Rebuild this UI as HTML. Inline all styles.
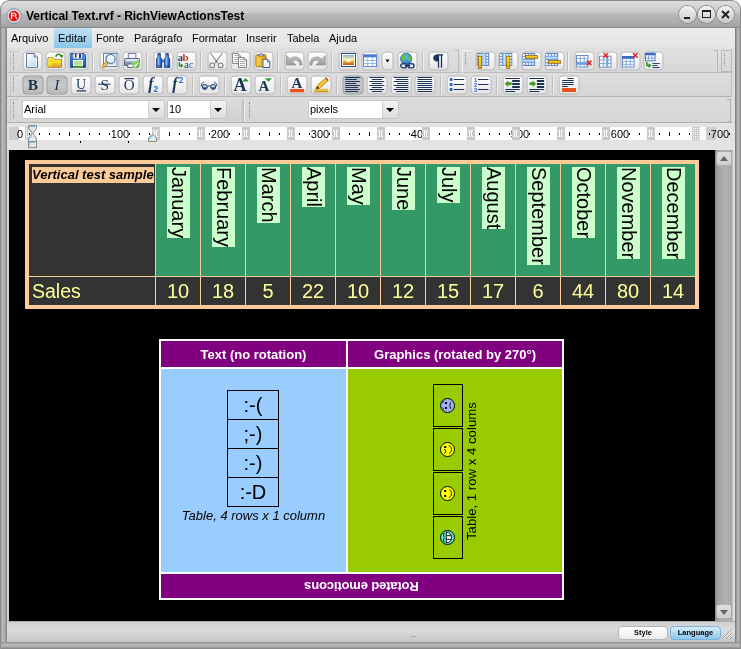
<!DOCTYPE html>
<html>
<head>
<meta charset="utf-8">
<title>Vertical Text.rvf - RichViewActionsTest</title>
<style>
html,body{margin:0;padding:0;}
body{width:741px;height:649px;overflow:hidden;background:#fff;font-family:"Liberation Sans",sans-serif;position:relative;}
.abs{position:absolute;}
#win{position:absolute;left:0;top:0;width:741px;height:649px;border-radius:9px 9px 0 0;overflow:hidden;
 background:linear-gradient(#e4e4e4 0px,#dcdcdc 2px,#c8c8c8 13px,#b8b8b8 14px,#a6a6a6 26px,#8c8c8c 27.5px,#a0a0a0 28px,#b0b0b0 649px);will-change:transform;}
#win:before{content:"";position:absolute;left:0;top:0;right:0;bottom:0;border:1px solid #8a8a8a;border-radius:9px 9px 0 0;box-sizing:border-box;}
#frameL{left:1px;top:28px;width:6px;height:614px;background:linear-gradient(90deg,#a0a0a0 0,#b8b8b8 1.5px,#acacac 4px,#8c8c8c 5px,#8a8a8a 6px);}
#frameR{left:734px;top:28px;width:6px;height:614px;background:linear-gradient(90deg,#e0e0e0 0,#7a7a7a 1px,#8a8a8a 2px,#acacac 3px,#b4b4b4 5px,#989898 6px);}
#frameB{left:1px;top:642px;width:739px;height:6px;background:linear-gradient(#8e8e8e,#b4b4b4 40%,#b8b8b8 70%,#8c8c8c);}
#client{left:7px;top:28px;width:728px;height:614px;background:#dedede;}
#title{left:26px;top:9px;font:bold 12px "Liberation Sans",sans-serif;color:#000;white-space:nowrap;letter-spacing:-0.05px;}
.cap{width:17px;height:17px;border-radius:9px;top:6px;background:linear-gradient(#f4f4f4,#c9c9c9);box-shadow:0 0 0 1px #8f8f8f;}
#menubar{left:7px;top:28px;width:728px;height:20px;background:linear-gradient(#ececec,#e4e4e4);}
.mi{position:absolute;top:28px;height:20px;line-height:20px;font-size:11px;color:#000;white-space:nowrap;}
#mhl{left:54px;top:28px;width:38px;height:20px;background:linear-gradient(#bfe0f3,#8dc6ea);}
.tbrow{left:7px;width:728px;}
.btn{position:absolute;box-sizing:border-box;border:1px solid #bcbcbc;border-radius:4px;background:linear-gradient(#ffffff,#f3f3f3 50%,#e4e4e4);overflow:hidden;}
.r1{top:51px;width:20px;height:19px;transform:translate(.5px,.5px);}
.r2{top:75px;width:21px;height:19px;transform:translate(.5px,.5px);}
.btn.dn{background:linear-gradient(#bdbdbd,#c9c9c9 50%,#b9b9b9);border-color:#9a9a9a;}
.btn svg{position:absolute;left:0;top:0;overflow:visible;}
.sep{position:absolute;width:1px;background:#bdbdbd;box-shadow:1px 0 0 #f2f2f2;}
.grip{position:absolute;width:1px;border-left:1px dotted #8a8a8a;}
#doc{left:9px;top:150px;width:706px;height:471px;background:#000;overflow:hidden;}
/* table 1 */
#t1{left:16px;top:10px;width:674px;height:149px;background:#ffcc99;}
.c1{position:absolute;background:#339966;top:4px;width:44px;height:112px;}
.c2{position:absolute;background:#333333;top:117px;width:44px;height:28px;color:#ffff99;font-size:20px;text-align:center;line-height:28px;}
.vl{position:absolute;left:11px;top:3px;writing-mode:vertical-rl;font-size:20px;line-height:23px;background:#ccffcc;color:#000;white-space:nowrap;height:auto;}
/* table 2 */
#t2{left:150px;top:189px;width:405px;height:261px;background:#fff;}
.hd{position:absolute;background:#800080;color:#fff;font:bold 13px "Liberation Sans",sans-serif;text-align:center;white-space:nowrap;}
.it1{position:absolute;left:66px;width:52px;height:30px;box-sizing:border-box;border:1px solid #000;font-size:20px;text-align:center;line-height:28px;color:#000;}
.it2{position:absolute;left:85px;width:30px;height:43px;box-sizing:border-box;border:1px solid #000;}
.it2 svg{position:absolute;left:6px;top:13px;}
</style>
</head>
<body>
<div id="win">
 <div id="frameL" class="abs"></div><div id="frameR" class="abs"></div><div id="frameB" class="abs"></div>
 <div id="client" class="abs"></div>
 <!-- title -->
 <svg class="abs" style="left:6px;top:8px" width="16" height="16" viewBox="0 0 16 16"><circle cx="8" cy="8" r="7.3" fill="#d9dde6" stroke="#7f8fae" stroke-width="1"/><circle cx="8" cy="8" r="5.2" fill="#e31313"/><path d="M5.5 11V5.2h3.2M5.5 7.8h2.6M8 5.4c2.2.2 2.6 1.6 1.2 2.6l1.6 3" stroke="#fff" stroke-width="1.1" fill="none"/></svg>
 <div id="title" class="abs">Vertical Text.rvf - RichViewActionsTest</div>
 <div class="abs cap" style="left:679px"><div class="abs" style="left:5px;top:11px;width:6px;height:2px;background:#222"></div></div>
 <div class="abs cap" style="left:698px"><div class="abs" style="left:4px;top:4px;width:9px;height:8px;box-sizing:border-box;border:1px solid #222;border-top-width:2px"></div></div>
 <div class="abs cap" style="left:717px"><svg class="abs" style="left:0;top:0" width="17" height="17"><path d="M5 5l7 7M12 5l-7 7" stroke="#222" stroke-width="2"/></svg></div>
 <!-- menu -->
 <div id="menubar" class="abs"></div>
 <div id="mhl" class="abs"></div>
 <div class="mi" style="left:11px">Arquivo</div>
 <div class="mi" style="left:58px">Editar</div>
 <div class="mi" style="left:96px">Fonte</div>
 <div class="mi" style="left:134px">Parágrafo</div>
 <div class="mi" style="left:192px">Formatar</div>
 <div class="mi" style="left:246px">Inserir</div>
 <div class="mi" style="left:287px">Tabela</div>
 <div class="mi" style="left:329px">Ajuda</div>
 <!-- toolbars -->
 <div id="tb1" class="abs tbrow" style="top:48px;height:24px;background:linear-gradient(#e0e0e0,#d7d7d7);border-bottom:1px solid #bcbcbc;width:725px"></div>
 <div id="tb2" class="abs tbrow" style="top:73px;height:23px;background:linear-gradient(#dedede,#d5d5d5);border-bottom:1px solid #b4b4b4;border-right:1px solid #bcbcbc;width:724px"></div>
 <div id="tb3" class="abs tbrow" style="top:97px;height:25px;background:linear-gradient(#dcdcdc,#d6d6d6);border-bottom:1px solid #b0b0b0;width:725px"></div>
 <div id="rulerbg" class="abs" style="left:7px;top:123px;width:728px;height:27px;background:#e3e3e3"></div>
 <svg width="0" height="0" style="position:absolute"><defs>
<linearGradient id="gPage" x1="0" y1="0" x2="0.8" y2="1"><stop offset="0" stop-color="#ffffff"/><stop offset="1" stop-color="#bcdcf0"/></linearGradient>
<linearGradient id="gFold" x1="0" y1="0" x2="0" y2="1"><stop offset="0" stop-color="#ffe23a"/><stop offset="1" stop-color="#e2a82e"/></linearGradient>
<linearGradient id="gBlue" x1="0" y1="0" x2="0" y2="1"><stop offset="0" stop-color="#5a98ea"/><stop offset="1" stop-color="#1a55b8"/></linearGradient>
<linearGradient id="gBino" x1="0" y1="0" x2="1" y2="0"><stop offset="0" stop-color="#1d4fae"/><stop offset="0.35" stop-color="#8fc0fa"/><stop offset="0.7" stop-color="#2f6fd6"/><stop offset="1" stop-color="#153c8c"/></linearGradient>
<linearGradient id="gSky" x1="0" y1="0" x2="0" y2="1"><stop offset="0" stop-color="#7fb6e8"/><stop offset="0.45" stop-color="#fff0a0"/><stop offset="0.6" stop-color="#ffb52e"/><stop offset="1" stop-color="#c95a10"/></linearGradient>
<linearGradient id="gCol" x1="0" y1="0" x2="1" y2="0"><stop offset="0" stop-color="#a8ccf4"/><stop offset="1" stop-color="#5a90d8"/></linearGradient>
<linearGradient id="gRow" x1="0" y1="0" x2="0" y2="1"><stop offset="0" stop-color="#a8ccf4"/><stop offset="1" stop-color="#5a90d8"/></linearGradient>
<linearGradient id="gGrey" x1="0" y1="0" x2="0" y2="1"><stop offset="0" stop-color="#c6c6c6"/><stop offset="1" stop-color="#9a9a9a"/></linearGradient>
<linearGradient id="gPrn" x1="0" y1="0" x2="0" y2="1"><stop offset="0" stop-color="#c4d0e0"/><stop offset="1" stop-color="#6f829e"/></linearGradient>
<radialGradient id="gChk" cx="0.4" cy="0.3" r="0.8"><stop offset="0" stop-color="#8fe060"/><stop offset="1" stop-color="#2a8a1a"/></radialGradient>
<radialGradient id="gGlobe" cx="0.4" cy="0.3" r="0.8"><stop offset="0" stop-color="#7cc0fa"/><stop offset="1" stop-color="#1c6ad0"/></radialGradient>
<linearGradient id="gYel" x1="0" y1="0" x2="1" y2="0"><stop offset="0" stop-color="#ffd83a"/><stop offset="1" stop-color="#e2a010"/></linearGradient>
<linearGradient id="gYelV" x1="0" y1="0" x2="0" y2="1"><stop offset="0" stop-color="#fff000"/><stop offset="1" stop-color="#e6a41c"/></linearGradient>
<linearGradient id="gCol2" x1="0" y1="0" x2="1" y2="0"><stop offset="0" stop-color="#8cc0f0"/><stop offset="0.5" stop-color="#c8e6fa"/><stop offset="1" stop-color="#7ab0ea"/></linearGradient><linearGradient id="gRow2" x1="0" y1="0" x2="0" y2="1"><stop offset="0" stop-color="#8cc0f0"/><stop offset="0.5" stop-color="#c8e6fa"/><stop offset="1" stop-color="#7ab0ea"/></linearGradient>
</defs></svg>
 <div class="grip" style="left:13px;top:53px;height:17px"></div>
 <div class="btn r1" style="left:22px;width:20px"><svg style="left:0px;top:0" width="16" height="16" viewBox="0 0 16 16"><g transform="translate(0.5 0.5)"><path d="M2.600 0.500h7.600l3.300 3.300v10.600h-10.900z" fill="#fff" stroke="#5d7293"/><path d="M4 2h5.800l2.200 2.500v8.500h-8z" fill="url(#gPage)"/><path d="M10 0.800v3.200h3.200" fill="#dbeaf6" stroke="#5d7293" stroke-width="0.900"/></g></svg></div>
 <div class="btn r1" style="left:45px;width:20px"><svg style="left:0px;top:0" width="16" height="16" viewBox="0 0 16 16"><g transform="translate(0.5 0.5)"><path d="M0.900 14.300v-9.500h5.200l1.300 1.700h7.200v7.800z" fill="url(#gFold)" stroke="#a87b2c" stroke-width="0.900"/><path d="M1.800 13.800v-8h4l1.200 1.600h6.800" fill="none" stroke="#fff56a" stroke-width="0.900"/><path d="M3.600 13.800v-4.400h10.500" fill="none" stroke="#fff000" stroke-width="1.100"/><path d="M8.600 3.600c1.200-2.800 4.200-3.200 5.800-.6" fill="none" stroke="#2f8f1c" stroke-width="1.500"/><path d="M12.200 2.200l4.200-.3-1.200 3.600z" fill="#2f8f1c"/></g></svg></div>
 <div class="btn r1" style="left:68px;width:20px"><svg style="left:0px;top:0" width="16" height="16" viewBox="0 0 16 16"><g transform="translate(0.5 0.5)"><path d="M0.700 0.500h13.300l1.600 1.600v12.300h-14.900z" fill="url(#gBlue)" stroke="#1a4798"/><rect x="3.500" y="0.500" width="8.500" height="5" fill="#f2f2f2"/><rect x="5" y="0.500" width="1.500" height="4" fill="#2c3a58"/><rect x="9" y="0.500" width="2" height="4.500" fill="#2c3a58"/><rect x="3" y="7" width="10" height="7.400" fill="#f6fff0"/><path d="M4 9h8M4 11h8" stroke="#7cc03c" stroke-width="1.200"/><rect x="3" y="12.800" width="10" height="1.800" fill="#46961c"/><rect x="1.500" y="12.500" width="1" height="1.200" fill="#0f2f78"/><rect x="13.500" y="12.500" width="1" height="1.200" fill="#0f2f78"/></g></svg></div>
 <div class="sep" style="left:92px;top:52px;height:19px"></div>
 <div class="btn r1" style="left:99px;width:20px"><svg style="left:0px;top:0" width="16" height="16" viewBox="0 0 16 16"><g transform="translate(0.5 0.5)"><rect x="2.500" y="0.500" width="13.500" height="13" fill="#f4f8fc" stroke="#6d7f9c"/><rect x="4" y="2" width="10.500" height="10" fill="#d4e0f0"/><circle cx="9.600" cy="5.900" r="4.500" fill="#e8f4fc" stroke="#6580a8" stroke-width="1.300"/><path d="M8 4.500q1.500-1.500 3.200-.8" stroke="#fff" stroke-width="1" fill="none"/><path d="M5.600 10l-3.300 3.600" stroke="#b87a16" stroke-width="3.200" stroke-linecap="round"/><path d="M5.400 10.200l-3 3.300" stroke="#ffdc7a" stroke-width="1.400" stroke-linecap="round"/></g></svg></div>
 <div class="btn r1" style="left:122px;width:20px"><svg style="left:0px;top:0" width="16" height="16" viewBox="0 0 16 16"><g transform="translate(0.5 0.5)"><rect x="4.300" y="0.500" width="7.600" height="6" fill="#f4f8fc" stroke="#70809a"/><path d="M1 5.500h14.200l0.300 1v6h-15v-6z" fill="url(#gPrn)" stroke="#55657f"/><rect x="1.500" y="6" width="13.500" height="2" fill="#e2e9f2"/><rect x="3.800" y="11" width="7" height="3.500" fill="#fff" stroke="#55657f"/><circle cx="12" cy="11.600" r="3.800" fill="url(#gChk)" stroke="#e2f4da" stroke-width="0.600"/><path d="M10 11.600l1.500 1.700 2.600-3.400" stroke="#fff" stroke-width="1.400" fill="none"/><rect x="13" y="6.500" width="1" height="1" fill="#3fae2a"/></g></svg></div>
 <div class="sep" style="left:146px;top:52px;height:19px"></div>
 <div class="btn r1" style="left:153px;width:20px"><svg style="left:0px;top:0" width="16" height="16" viewBox="0 0 16 16"><g transform="translate(0.5 0.5)"><path d="M1.500 14.500v-8.500l1.300-1.800v-3.700h2.600v3.700l1.300 1.800v8.500z" fill="url(#gBino)" stroke="#143a86" stroke-width="0.800"/><path d="M9.500 14.500v-8.500l1.300-1.800v-3.700h2.600v3.700l1.300 1.800v8.500z" fill="url(#gBino)" stroke="#143a86" stroke-width="0.800"/><rect x="6.900" y="6.500" width="2.500" height="3" fill="#3a6cc8"/><path d="M1.800 13h4.800M9.800 13h4.800M3 1.800h2.200M11 1.800h2.200" stroke="#0f2f78" stroke-width="0.700"/></g></svg></div>
 <div class="btn r1" style="left:176px;width:20px"><svg style="left:0px;top:0" width="16" height="16" viewBox="0 0 16 16"><g transform="translate(0.5 0.5)"><text x="-0.300" y="7.600" font-family="Liberation Serif,serif" font-weight="bold" font-size="10.500" fill="#1c3557">a</text><text x="4.600" y="7.600" font-family="Liberation Serif,serif" font-weight="bold" font-size="11" fill="#b5431a">b</text><text x="5.900" y="15" font-family="Liberation Serif,serif" font-size="11" fill="#1c3557">a</text><text x="10.700" y="15" font-family="Liberation Serif,serif" font-size="11" fill="#2a62d8">c</text><path d="M1.300 9.300v3.400h2" stroke="#2f8f1c" stroke-width="1.400" fill="none"/><path d="M2.800 10.200l2.600 2.500-2.600 2.300z" fill="#2f8f1c"/></g></svg></div>
 <div class="sep" style="left:200px;top:52px;height:19px"></div>
 <div class="btn r1" style="left:207px;width:20px"><svg style="left:0px;top:0" width="16" height="16" viewBox="0 0 16 16"><g transform="translate(0.5 0.5)"><path d="M1.500 0.300l7.300 10M13.300 0.300l-7.300 10" stroke="#808080" stroke-width="1.100" fill="none"/><circle cx="3.200" cy="12.400" r="2.400" fill="none" stroke="#808080" stroke-width="1.100"/><circle cx="11.600" cy="12.400" r="2.400" fill="none" stroke="#808080" stroke-width="1.100"/><circle cx="7.400" cy="8.300" r="0.700" fill="#555"/></g></svg></div>
 <div class="btn r1" style="left:230px;width:20px"><svg style="left:0px;top:0" width="16" height="16" viewBox="0 0 16 16"><g transform="translate(0.5 0.5)"><path d="M0.500 0.500h5.500l2.500 2.500v7.500h-8z" fill="#fff" stroke="#8a8a8a"/><path d="M6 0.500v2.500h2.500" fill="#e0e0e0" stroke="#8a8a8a"/><path d="M2 2.500h3M2 4.500h5M2 6.500h5M2 8.500h5" stroke="#b4b4b4"/><path d="M6.500 4.500h5.500l2.500 2.500v7.500h-8z" fill="#fff" stroke="#7c7c7c"/><path d="M12 4.500v2.500h2.500" fill="#e0e0e0" stroke="#7c7c7c"/><path d="M8 6.500h3M8 8.500h5M8 10.500h5M8 12.500h5" stroke="#a8a8a8"/></g></svg></div>
 <div class="btn r1" style="left:253px;width:20px"><svg style="left:0px;top:0" width="16" height="16" viewBox="0 0 16 16"><g transform="translate(0.5 0.5)"><rect x="0.900" y="1.700" width="10" height="12" rx="1" fill="url(#gYel)" stroke="#9c7418"/><path d="M3.500 3v-1.500h1.500l.5-1h1l.5 1h1.500v1.500z" fill="#d4d8e2" stroke="#5f6b84" stroke-width="0.900"/><path d="M7.900 6.200h4.600l2.300 2.300v6h-6.900z" fill="#f0f6fc" stroke="#3f5a86"/><path d="M12.300 6.400v2.300h2.300" fill="none" stroke="#3f5a86" stroke-width="0.800"/></g></svg></div>
 <div class="sep" style="left:277px;top:52px;height:19px"></div>
 <div class="btn r1" style="left:284px;width:20px"><svg style="left:0px;top:0" width="16" height="16" viewBox="0 0 16 16"><g transform="translate(0.5 0.5)"><path d="M0.500 2.500v9.500h9.500l-3.600-3.400c2.600-2.600 7-1.800 7.600 3.400h2c0-8-7.600-10.200-11.800-6z" fill="url(#gGrey)" stroke="#909090" stroke-width="0.700"/></g></svg></div>
 <div class="btn r1" style="left:307px;width:20px"><svg style="left:0px;top:0" width="16" height="16" viewBox="0 0 16 16"><g transform="translate(0.5 0.5)"><path d="M16.300 2.500v9.500h-9.500l3.600-3.400c-2.600-2.600-7-1.800-7.600 3.400h-2c0-8 7.600-10.200 11.800-6z" fill="url(#gGrey)" stroke="#909090" stroke-width="0.700"/></g></svg></div>
 <div class="sep" style="left:331px;top:52px;height:19px"></div>
 <div class="btn r1" style="left:338px;width:20px"><svg style="left:0px;top:0" width="16" height="16" viewBox="0 0 16 16"><g transform="translate(0.5 0.5)"><rect x="1.500" y="0.500" width="14" height="13" fill="#fff" stroke="#2f4f88"/><rect x="3" y="2" width="11" height="10" fill="url(#gSky)"/><ellipse cx="8.500" cy="7.600" rx="2.600" ry="1.600" fill="#fffbd6"/></g></svg></div>
 <div class="btn r1" style="left:361px;width:17px"><svg style="left:0px;top:0" width="14" height="16" viewBox="0 0 14 16"><g transform="translate(0.5 0.5)"><rect x="0.500" y="2" width="13" height="11.500" fill="#fff" stroke="#5a86d0"/><rect x="0" y="1.500" width="14" height="2.800" fill="#4a7cd0"/><path d="M0.500 7.500h13M0.500 10.500h13M4.700 4.500v9M9.300 4.500v9" stroke="#8eb0e4" stroke-width="0.900"/></g></svg></div>
 <div class="btn r1" style="left:381px;width:12px"><div style="position:absolute;left:2.5px;top:7px;border:2.5px solid transparent;border-bottom:0;border-top:3px solid #000"></div></div>
 <div class="btn r1" style="left:397px;width:20px"><svg style="left:1px;top:0" width="16" height="16" viewBox="0 0 16 16"><g transform="translate(0.5 0.5)"><circle cx="6.200" cy="5.800" r="5.600" fill="url(#gGlobe)" stroke="#1c5cae" stroke-width="0.800"/><path d="M2.200 2.600c1.400-1.600 3.400-1.800 4.600-.8c.4 1.400-1.200 2-2 3c-.6 1.400.4 2.400-.6 3.400c-1.400.4-2.800-1.200-3.200-2.800c0-1 .4-2 1.200-2.800zM8.600 3.800c1-.8 2.400-.4 3 .8c.4 1.600-.4 3.400-1.800 4.400c-1-.8-1.800-3.600-1.200-5.200z" fill="#5cc838"/><rect x="0.800" y="10.700" width="6" height="4.200" rx="2.100" fill="#eef3fa" stroke="#1f3c6a" stroke-width="1.400"/><rect x="8" y="10.700" width="6" height="4.200" rx="2.100" fill="#eef3fa" stroke="#1f3c6a" stroke-width="1.400"/><path d="M4.800 12.800h5.400" stroke="#1f3c6a" stroke-width="1.500"/></g></svg></div>
 <div class="sep" style="left:422px;top:52px;height:19px"></div>
 <div class="btn r1" style="left:428px;width:20px"><svg style="left:0px;top:0" width="16" height="16" viewBox="0 0 16 16"><g transform="translate(0.5 0.5)"><path d="M7.500 1.900h5.700" stroke="#1c3557" stroke-width="1.100"/><path d="M8.500 1.500v13.300M11.500 1.500v13.300" stroke="#1c3557" stroke-width="1.300" fill="none"/><path d="M8.400 1.400c-4.600-.3-5.200 2.200-5.200 3.600s1 3.700 5.200 3.500z" fill="#1c3557"/></g></svg></div>
 <div class="abs" style="left:455px;top:50px;width:4px;height:22px;border:1px solid #b8b8b8;border-left:0;border-bottom:0;box-sizing:border-box"></div>
 <div class="abs" style="left:462px;top:50px;width:10px;height:23px;border:1px solid #f2f2f2;border-right:0;border-bottom:0;box-sizing:border-box"></div>
 <div class="grip" style="left:465px;top:53px;height:13px"></div>
 <div class="btn r1" style="left:475px;width:20px"><svg style="left:1px;top:0" width="16" height="16" viewBox="0 0 16 16"><g transform="translate(0.5 0.5)"><rect x="-0.900" y="0.200" width="11.800" height="12.300" fill="#6f96d6" stroke="#3f5f9c" stroke-width="0.6"/><rect x="4.400" y="0.500" width="3.400" height="11.700" fill="url(#gCol2)"/><rect x="-0.3" y="1" width="1.8" height="1.8" fill="#fff"/><rect x="-0.3" y="4" width="1.8" height="1.8" fill="#fff"/><rect x="-0.3" y="7" width="1.8" height="1.8" fill="#fff"/><rect x="-0.3" y="10" width="1.8" height="1.8" fill="#fff"/><rect x="2.4" y="1" width="1.8" height="1.8" fill="#fff"/><rect x="2.4" y="4" width="1.8" height="1.8" fill="#fff"/><rect x="2.4" y="7" width="1.8" height="1.8" fill="#fff"/><rect x="2.4" y="10" width="1.8" height="1.8" fill="#fff"/><rect x="8.4" y="1" width="1.8" height="1.8" fill="#fff"/><rect x="8.4" y="4" width="1.8" height="1.8" fill="#fff"/><rect x="8.4" y="7" width="1.8" height="1.8" fill="#fff"/><rect x="8.4" y="10" width="1.8" height="1.8" fill="#fff"/><rect x="0.400" y="3.300" width="3.200" height="12" fill="url(#gYelV)" stroke="#96661a" stroke-width="0.8"/></g></svg></div>
 <div class="btn r1" style="left:498px;width:20px"><svg style="left:1px;top:0" width="16" height="16" viewBox="0 0 16 16"><g transform="translate(0.5 0.5)"><rect x="-1.800" y="0.200" width="12.700" height="12.300" fill="#6f96d6" stroke="#3f5f9c" stroke-width="0.6"/><rect x="1.900" y="0.500" width="3.200" height="11.700" fill="url(#gCol2)"/><rect x="-0.9" y="1" width="1.8" height="1.8" fill="#fff"/><rect x="-0.9" y="4" width="1.8" height="1.8" fill="#fff"/><rect x="-0.9" y="7" width="1.8" height="1.8" fill="#fff"/><rect x="-0.9" y="10" width="1.8" height="1.8" fill="#fff"/><rect x="5.6" y="1" width="1.8" height="1.8" fill="#fff"/><rect x="5.6" y="4" width="1.8" height="1.8" fill="#fff"/><rect x="5.6" y="7" width="1.8" height="1.8" fill="#fff"/><rect x="5.6" y="10" width="1.8" height="1.8" fill="#fff"/><rect x="8.6" y="1" width="1.8" height="1.8" fill="#fff"/><rect x="8.6" y="4" width="1.8" height="1.8" fill="#fff"/><rect x="8.6" y="7" width="1.8" height="1.8" fill="#fff"/><rect x="8.6" y="10" width="1.8" height="1.8" fill="#fff"/><rect x="5.600" y="3.300" width="3.200" height="12" fill="url(#gYelV)" stroke="#96661a" stroke-width="0.8"/></g></svg></div>
 <div class="btn r1" style="left:521px;width:20px"><svg style="left:1px;top:0" width="16" height="16" viewBox="0 0 16 16"><g transform="translate(0.5 0.5)"><rect x="-1.900" y="0.200" width="12.700" height="12.300" fill="#6f96d6" stroke="#3f5f9c" stroke-width="0.6"/><rect x="-1.600" y="6.600" width="12.100" height="2.600" fill="url(#gRow2)"/><rect x="-1" y="1" width="1.8" height="1.8" fill="#fff"/><rect x="-1" y="3.9" width="1.8" height="1.8" fill="#fff"/><rect x="-1" y="10" width="1.8" height="1.8" fill="#fff"/><rect x="2" y="1" width="1.8" height="1.8" fill="#fff"/><rect x="2" y="3.9" width="1.8" height="1.8" fill="#fff"/><rect x="2" y="10" width="1.8" height="1.8" fill="#fff"/><rect x="5" y="1" width="1.8" height="1.8" fill="#fff"/><rect x="5" y="3.9" width="1.8" height="1.8" fill="#fff"/><rect x="5" y="10" width="1.8" height="1.8" fill="#fff"/><rect x="8" y="1" width="1.8" height="1.8" fill="#fff"/><rect x="8" y="3.9" width="1.8" height="1.8" fill="#fff"/><rect x="8" y="10" width="1.8" height="1.8" fill="#fff"/><rect x="1.500" y="2.400" width="11.900" height="2.900" fill="url(#gYelV)" stroke="#96661a" stroke-width="0.8"/></g></svg></div>
 <div class="btn r1" style="left:544px;width:20px"><svg style="left:1px;top:0" width="16" height="16" viewBox="0 0 16 16"><g transform="translate(0.5 0.5)"><rect x="-2" y="0.200" width="12.800" height="12.300" fill="#6f96d6" stroke="#3f5f9c" stroke-width="0.6"/><rect x="-1.700" y="3.500" width="12.200" height="2.700" fill="url(#gRow2)"/><rect x="-1.1" y="1" width="1.8" height="1.8" fill="#fff"/><rect x="-1.1" y="7.2" width="1.8" height="1.8" fill="#fff"/><rect x="-1.1" y="10.3" width="1.8" height="1.8" fill="#fff"/><rect x="1.9" y="1" width="1.8" height="1.8" fill="#fff"/><rect x="1.9" y="7.2" width="1.8" height="1.8" fill="#fff"/><rect x="1.9" y="10.3" width="1.8" height="1.8" fill="#fff"/><rect x="4.9" y="1" width="1.8" height="1.8" fill="#fff"/><rect x="4.9" y="7.2" width="1.8" height="1.8" fill="#fff"/><rect x="4.9" y="10.3" width="1.8" height="1.8" fill="#fff"/><rect x="7.9" y="1" width="1.8" height="1.8" fill="#fff"/><rect x="7.9" y="7.2" width="1.8" height="1.8" fill="#fff"/><rect x="7.9" y="10.3" width="1.8" height="1.8" fill="#fff"/><rect x="1.500" y="7.400" width="12" height="2.900" fill="url(#gYelV)" stroke="#96661a" stroke-width="0.8"/></g></svg></div>
 <div class="sep" style="left:567px;top:52px;height:19px"></div>
 <div class="btn r1" style="left:574px;width:20px"><svg style="left:1px;top:0" width="16" height="16" viewBox="0 0 16 16"><g transform="translate(0 0.5)"><rect x="0" y="2.500" width="11.500" height="11.500" fill="#fff" stroke="#6c8ccc"/><path d="M0 5.500h11.500M0 11.500h11.500M3.800 2.500v11.500M7.700 2.500v11.500" stroke="#8aa8dc"/><rect x="0.500" y="8.300" width="10.500" height="2.800" fill="url(#gRow)"/><path d="M10.3 7.6l4.6 4.6M14.9 7.6l-4.6 4.6" stroke="#e8201c" stroke-width="1.500"/></g></svg></div>
 <div class="btn r1" style="left:597px;width:20px"><svg style="left:1px;top:0" width="16" height="16" viewBox="0 0 16 16"><g transform="translate(0 0.5)"><rect x="0" y="3.200" width="11.500" height="11" fill="#fff" stroke="#6c8ccc"/><path d="M0 6.800h11.500M0 10.500h11.500M3.800 3.200v11M7.700 3.200v11" stroke="#8aa8dc"/><rect x="6" y="3.700" width="2.800" height="10" fill="url(#gCol)"/><path d="M4 0l4.6 4.6M8.6 0l-4.6 4.6" stroke="#e8201c" stroke-width="1.500"/></g></svg></div>
 <div class="btn r1" style="left:620px;width:20px"><svg style="left:1px;top:0" width="16" height="16" viewBox="0 0 16 16"><g transform="translate(0 0.5)"><rect x="0" y="3.500" width="11.500" height="10.500" fill="#fff" stroke="#6c8ccc"/><rect x="-0.500" y="3" width="12.500" height="2.800" fill="#3b6cc4"/><path d="M0 8.500h11.500M0 11.300h11.500M3.800 6v8M7.700 6v8" stroke="#8aa8dc"/><path d="M10.5 0l4.6 4.6M15.1 0l-4.6 4.6" stroke="#e8201c" stroke-width="1.500"/></g></svg></div>
 <div class="btn r1" style="left:643px;width:20px"><svg style="left:1px;top:0" width="16" height="16" viewBox="0 0 16 16"><g transform="translate(0 0.5)"><g transform="translate(-0.8 0)"><rect x="0.800" y="0.200" width="9.500" height="7.600" fill="#fff" stroke="#4a74c4"/><rect x="0.300" y="-0.300" width="10.500" height="2.600" fill="#3b6cc4"/><path d="M0.800 5h9.500M4 2.300v5.500M7.200 2.300v5.500" stroke="#7fa0dc"/><path d="M2.200 9v3.600h2.400" stroke="#2c8a1c" stroke-width="1.500" fill="none"/><path d="M3.800 10.200l2.900 2.400-2.900 2.400z" fill="#2c8a1c"/><path d="M7.800 10.500h7.200M7.800 12.500h5M7.800 14.500h7.200" stroke="#2c4a78" stroke-width="1"/></g></g></svg></div>
 <div class="abs" style="left:714px;top:50px;width:4px;height:22px;border:1px solid #b8b8b8;border-left:0;border-bottom:0;box-sizing:border-box"></div>
 <div class="abs" style="left:721px;top:50px;width:11px;height:22px;border:1px solid #b8b8b8;box-sizing:border-box"></div>
 <div class="grip" style="left:724px;top:53px;height:13px"></div>
 <div class="grip" style="left:13px;top:77px;height:15px"></div>
 <div class="btn r2 dn" style="left:22px"><svg width="19" height="17" viewBox="0 0 19 17"><text x="9.4" y="13" text-anchor="middle" font-family="Liberation Serif,serif" font-size="15.5" font-weight="bold" fill="#1c3557">B</text></svg></div>
 <div class="btn r2 dn" style="left:46px"><svg width="19" height="17" viewBox="0 0 19 17"><text x="9.3" y="13" text-anchor="middle" font-family="Liberation Serif,serif" font-size="15.5" font-style="italic" fill="#1c3557">I</text></svg></div>
 <div class="btn r2" style="left:70px"><svg width="19" height="17" viewBox="0 0 19 17"><text x="9.6" y="12.2" text-anchor="middle" font-family="Liberation Serif,serif" font-size="14"  fill="#1c3557">U</text><path d="M5 14.400h9.500" stroke="#1c3557" stroke-width="1.100"/></svg></div>
 <div class="btn r2" style="left:94px"><svg width="19" height="17" viewBox="0 0 19 17"><text x="9.3" y="13.2" text-anchor="middle" font-family="Liberation Serif,serif" font-size="15.5"  fill="#1c3557">S</text><path d="M2.500 7.700h12.600" stroke="#1c3557" stroke-width="1"/></svg></div>
 <div class="btn r2" style="left:118px"><svg width="19" height="17" viewBox="0 0 19 17"><text x="9.7" y="13.9" text-anchor="middle" font-family="Liberation Serif,serif" font-size="15"  fill="#1c3557">O</text><path d="M5 2.100h9.500" stroke="#1c3557" stroke-width="1.100"/></svg></div>
 <div class="btn r2" style="left:142px"><svg width="19" height="17" viewBox="0 0 19 17"><text x="7.3" y="12" text-anchor="middle" font-family="Liberation Serif,serif" font-size="16" font-style="italic" font-weight="bold" fill="#1c3557">f</text><text x="12.4" y="15.1" text-anchor="middle" font-family="Liberation Sans,sans-serif" font-size="8.5" font-weight="bold" fill="#1e6fd8">2</text></svg></div>
 <div class="btn r2" style="left:166px"><svg width="19" height="17" viewBox="0 0 19 17"><text x="7.4" y="12.6" text-anchor="middle" font-family="Liberation Serif,serif" font-size="16" font-style="italic" font-weight="bold" fill="#1c3557">f</text><text x="13.7" y="6.6" text-anchor="middle" font-family="Liberation Sans,sans-serif" font-size="8.5" font-weight="bold" fill="#1e6fd8">2</text></svg></div>
 <div class="sep" style="left:192px;top:76px;height:18px"></div>
 <div class="btn r2" style="left:198px"><svg width="19" height="17" viewBox="0 0 19 17"><path d="M1.600 9.800c.3-2.200 1.200-3.800 2.900-4.400M17.400 9.800c-.3-2.200-1.200-3.800-2.900-4.400" stroke="#1c3557" stroke-width="1" fill="none"/><circle cx="5.300" cy="10.400" r="2.500" fill="#c4d6ee" stroke="#1c3557" stroke-width="1"/><circle cx="13.700" cy="10.400" r="2.500" fill="#c4d6ee" stroke="#1c3557" stroke-width="1"/><path d="M3.100 10.800a2.200 2.200 0 0 0 4.400 0zM11.500 10.800a2.200 2.200 0 0 0 4.400 0z" fill="#2c4f92"/><path d="M7.800 9.800q1.700-1 3.400 0" stroke="#1c3557" stroke-width="1" fill="none"/></svg></div>
 <div class="sep" style="left:224px;top:76px;height:18px"></div>
 <div class="btn r2" style="left:230px"><svg width="19" height="17" viewBox="0 0 19 17"><text x="8.4" y="14" text-anchor="middle" font-family="Liberation Serif,serif" font-size="18" font-weight="bold" fill="#1c3557">A</text><path d="M10.500 5.100l3.500-3.500 3.500 3.500z" fill="#2f9a24"/></svg></div>
 <div class="btn r2" style="left:254px"><svg width="19" height="17" viewBox="0 0 19 17"><text x="8.5" y="14" text-anchor="middle" font-family="Liberation Serif,serif" font-size="15" font-weight="bold" fill="#1c3557">A</text><path d="M9.400 1.700h7.200l-3.600 3.500z" fill="#2f9a24"/></svg></div>
 <div class="sep" style="left:280px;top:76px;height:18px"></div>
 <div class="btn r2" style="left:286px"><svg width="19" height="17" viewBox="0 0 19 17"><text x="9.4" y="11.3" text-anchor="middle" font-family="Liberation Serif,serif" font-size="15" font-weight="bold" fill="#1c3557">A</text><rect x="2.600" y="12.500" width="14" height="3.300" fill="#e8501c"/></svg></div>
 <div class="btn r2" style="left:310px"><svg width="19" height="17" viewBox="0 0 19 17"><rect x="2.800" y="12.200" width="14.100" height="3.600" fill="#e6c04c"/><rect x="2.800" y="14.600" width="14.100" height="1.200" fill="#b8922a"/><path d="M5.600 9.200l8.600-7.800 2.400 2.600-8.600 7.800-3.100 .6z" fill="#f4c62a" stroke="#a87c14" stroke-width="0.800"/><path d="M13.600 2l1.300-1.200 2.400 2.600-1.300 1.200z" fill="#d04a24"/><path d="M5.500 9.400l-.8 3.100 3.200-.7z" fill="#2a2a2a"/></svg></div>
 <div class="sep" style="left:336px;top:76px;height:18px"></div>
 <div class="btn r2 dn" style="left:342px"><svg width="19" height="17" viewBox="0 0 19 17"><rect x="1.7" y="0.5" width="14.6" height="1" fill="#1c3557"/><rect x="1.7" y="2.5" width="11.6" height="1" fill="#1c3557"/><rect x="1.7" y="4.5" width="14.6" height="1" fill="#1c3557"/><rect x="1.7" y="6.5" width="11.0" height="1" fill="#1c3557"/><rect x="1.7" y="8.5" width="14.6" height="1" fill="#1c3557"/><rect x="1.7" y="10.5" width="12.8" height="1" fill="#1c3557"/><rect x="1.7" y="12.5" width="14.6" height="1" fill="#1c3557"/><rect x="1.7" y="14.5" width="12.8" height="1" fill="#1c3557"/></svg></div>
 <div class="btn r2" style="left:366px"><svg width="19" height="17" viewBox="0 0 19 17"><rect x="2" y="0.5" width="14.8" height="1" fill="#1c3557"/><rect x="4.3" y="2.5" width="10.4" height="1" fill="#1c3557"/><rect x="2" y="4.5" width="14.8" height="1" fill="#1c3557"/><rect x="4.3" y="6.5" width="10.4" height="1" fill="#1c3557"/><rect x="2" y="8.5" width="14.8" height="1" fill="#1c3557"/><rect x="4.3" y="10.5" width="10.4" height="1" fill="#1c3557"/><rect x="2" y="12.5" width="14.8" height="1" fill="#1c3557"/><rect x="4.3" y="14.5" width="10.4" height="1" fill="#1c3557"/></svg></div>
 <div class="btn r2" style="left:390px"><svg width="19" height="17" viewBox="0 0 19 17"><rect x="2.1" y="0.5" width="14.8" height="1" fill="#1c3557"/><rect x="4.6" y="2.5" width="12.3" height="1" fill="#1c3557"/><rect x="2.1" y="4.5" width="14.8" height="1" fill="#1c3557"/><rect x="5.6" y="6.5" width="11.3" height="1" fill="#1c3557"/><rect x="2.1" y="8.5" width="14.8" height="1" fill="#1c3557"/><rect x="4.6" y="10.5" width="12.3" height="1" fill="#1c3557"/><rect x="2.1" y="12.5" width="14.8" height="1" fill="#1c3557"/><rect x="4.6" y="14.5" width="12.3" height="1" fill="#1c3557"/></svg></div>
 <div class="btn r2" style="left:414px"><svg width="19" height="17" viewBox="0 0 19 17"><rect x="1.9" y="0.5" width="14.8" height="1" fill="#1c3557"/><rect x="1.9" y="2.5" width="14.8" height="1" fill="#1c3557"/><rect x="1.9" y="4.5" width="14.8" height="1" fill="#1c3557"/><rect x="1.9" y="6.5" width="14.8" height="1" fill="#1c3557"/><rect x="1.9" y="8.5" width="14.8" height="1" fill="#1c3557"/><rect x="1.9" y="10.5" width="14.8" height="1" fill="#1c3557"/><rect x="1.9" y="12.5" width="14.8" height="1" fill="#1c3557"/><rect x="1.9" y="14.5" width="14.8" height="1" fill="#1c3557"/></svg></div>
 <div class="sep" style="left:440px;top:76px;height:18px"></div>
 <div class="btn r2" style="left:446px"><svg width="19" height="17" viewBox="0 0 19 17"><rect x="2.200" y="1.500" width="2.800" height="3" fill="#2a62d8"/><rect x="2.200" y="6.500" width="2.800" height="3" fill="#2a62d8"/><rect x="2.200" y="11.500" width="2.800" height="3" fill="#2a62d8"/><rect x="6.3" y="2.5" width="10.5" height="1" fill="#1c3557"/><rect x="6.3" y="7.5" width="10.5" height="1" fill="#1c3557"/><rect x="6.3" y="12.5" width="10.5" height="1" fill="#1c3557"/></svg></div>
 <div class="btn r2" style="left:470px"><svg width="19" height="17" viewBox="0 0 19 17"><text x="4" y="5.2" text-anchor="middle" font-family="Liberation Sans,sans-serif" font-size="5.8" font-weight="bold" fill="#2a62d8">1</text><text x="4" y="10.2" text-anchor="middle" font-family="Liberation Sans,sans-serif" font-size="5.8" font-weight="bold" fill="#2a62d8">2</text><text x="4" y="15.2" text-anchor="middle" font-family="Liberation Sans,sans-serif" font-size="5.8" font-weight="bold" fill="#2a62d8">3</text><rect x="6.5" y="2.5" width="10.5" height="1" fill="#1c3557"/><rect x="6.5" y="7.5" width="10.5" height="1" fill="#1c3557"/><rect x="6.5" y="12.5" width="10.5" height="1" fill="#1c3557"/></svg></div>
 <div class="sep" style="left:496px;top:76px;height:18px"></div>
 <div class="btn r2" style="left:502px"><svg width="19" height="17" viewBox="0 0 19 17"><rect x="1.7" y="1.5" width="14.6" height="1" fill="#1c3557"/><rect x="8.7" y="3.5" width="7.6" height="2" fill="#1c3557"/><rect x="8.7" y="6.5" width="7.6" height="2" fill="#1c3557"/><rect x="8.7" y="9.5" width="7.6" height="2" fill="#1c3557"/><rect x="1.7" y="12.5" width="14.6" height="1" fill="#1c3557"/><rect x="1.7" y="14.5" width="10.0" height="1" fill="#1c3557"/><path d="M1.200 7.200l3.600-3.500v2.100h3.400v2.800h-3.400v2.100z" fill="#3f9e22"/></svg></div>
 <div class="btn r2" style="left:526px"><svg width="19" height="17" viewBox="0 0 19 17"><rect x="1.8" y="1.5" width="14.9" height="1" fill="#1c3557"/><rect x="9.4" y="3.5" width="7.3" height="2" fill="#1c3557"/><rect x="9.4" y="6.5" width="7.3" height="2" fill="#1c3557"/><rect x="9.4" y="9.5" width="7.3" height="2" fill="#1c3557"/><rect x="1.8" y="12.5" width="14.9" height="1" fill="#1c3557"/><rect x="1.8" y="14.5" width="10.0" height="1" fill="#1c3557"/><path d="M8.600 7.200l-3.600-3.500v2.100h-3.000v2.800h3.000v2.100z" fill="#3f9e22"/></svg></div>
 <div class="sep" style="left:552px;top:76px;height:18px"></div>
 <div class="btn r2" style="left:558px"><svg width="19" height="17" viewBox="0 0 19 17"><rect x="7.9" y="1.5" width="6.3" height="1" fill="#1c3557"/><rect x="2.6" y="3.5" width="11.6" height="1" fill="#1c3557"/><rect x="2.6" y="5.5" width="11.6" height="1" fill="#1c3557"/><rect x="2.6" y="7.5" width="11.6" height="1" fill="#1c3557"/><rect x="2.6" y="9.5" width="5.5" height="1" fill="#1c3557"/><rect x="2.600" y="11.500" width="13.900" height="4" fill="#e8501c"/></svg></div>
 <div class="grip" style="left:13px;top:102px;height:16px"></div>
 <div class="abs" style="left:10px;top:51px;width:9px;height:21px;border:1px solid #c6c6c6;border-right:0;border-bottom:0;box-sizing:border-box"></div>
 <div class="abs" style="left:10px;top:75px;width:9px;height:21px;border:1px solid #c6c6c6;border-right:0;border-bottom:0;box-sizing:border-box"></div>
 <div class="abs" style="left:10px;top:99px;width:9px;height:22px;border:1px solid #c6c6c6;border-right:0;border-bottom:0;box-sizing:border-box"></div>
 <div class="abs" style="left:22px;top:100px;width:143px;height:19px;box-sizing:border-box;border:1px solid #c6c6c6;border-radius:2px;background:#fff;"><div class="abs" style="left:1px;top:0;line-height:17px;font-size:11px;color:#000">Arial</div><div class="abs" style="right:0;top:0;width:16px;height:17px;background:linear-gradient(#f2f2f2,#dcdcdc);border-left:1px solid #d0d0d0;box-sizing:border-box"><div class="abs" style="left:3px;top:7px;border:4px solid transparent;border-bottom:0;border-top:4px solid #000"></div></div></div>
 <div class="abs" style="left:167px;top:100px;width:60px;height:19px;box-sizing:border-box;border:1px solid #c6c6c6;border-radius:2px;background:#fff;"><div class="abs" style="left:1px;top:0;line-height:17px;font-size:11px;color:#000">10</div><div class="abs" style="right:0;top:0;width:16px;height:17px;background:linear-gradient(#f2f2f2,#dcdcdc);border-left:1px solid #d0d0d0;box-sizing:border-box"><div class="abs" style="left:3px;top:7px;border:4px solid transparent;border-bottom:0;border-top:4px solid #000"></div></div></div>
 <div class="abs" style="left:227px;top:99px;width:15px;height:22px;background:linear-gradient(#dcdcdc,#d0d0d0)"></div>
 <div class="abs" style="left:242px;top:99px;width:2px;height:23px;background:#c0c0c0;border-right:1px solid #f0f0f0"></div>
 <div class="grip" style="left:249px;top:102px;height:16px"></div>
 <div class="abs" style="left:308px;top:100px;width:91px;height:19px;box-sizing:border-box;border:1px solid #c6c6c6;border-radius:2px;background:#fff;"><div class="abs" style="left:1px;top:0;line-height:17px;font-size:11px;color:#000">pixels</div><div class="abs" style="right:0;top:0;width:16px;height:17px;background:linear-gradient(#f2f2f2,#dcdcdc);border-left:1px solid #d0d0d0;box-sizing:border-box"><div class="abs" style="left:3px;top:7px;border:4px solid transparent;border-bottom:0;border-top:4px solid #000"></div></div></div>
 <div class="abs" style="left:727px;top:99px;width:4px;height:23px;border:1px solid #b4b4b4;border-left:0;box-sizing:border-box"></div>
 <div class="abs" style="left:9px;top:127px;width:10px;height:13px;background:#cdcdcd"></div>
 <div class="abs" style="left:19px;top:127px;width:687px;height:13px;background:#fff"></div>
 <div class="abs" style="left:706px;top:127px;width:10px;height:13px;background:#cdcdcd"></div>
 <svg class="abs" style="left:0;top:123px" width="741" height="27" viewBox="0 0 741 27"><rect x="29" y="10" width="1" height="2" fill="#000"/><rect x="39" y="10" width="1" height="2" fill="#000"/><rect x="49" y="10" width="1" height="2" fill="#000"/><rect x="59" y="10" width="1" height="2" fill="#000"/><rect x="69" y="9" width="1" height="4" fill="#000"/><rect x="79" y="10" width="1" height="2" fill="#000"/><rect x="89" y="10" width="1" height="2" fill="#000"/><rect x="99" y="10" width="1" height="2" fill="#000"/><rect x="109" y="10" width="1" height="2" fill="#000"/><rect x="129" y="10" width="1" height="2" fill="#000"/><rect x="139" y="10" width="1" height="2" fill="#000"/><rect x="149" y="10" width="1" height="2" fill="#000"/><rect x="159" y="10" width="1" height="2" fill="#000"/><rect x="169" y="9" width="1" height="4" fill="#000"/><rect x="179" y="10" width="1" height="2" fill="#000"/><rect x="189" y="10" width="1" height="2" fill="#000"/><rect x="199" y="10" width="1" height="2" fill="#000"/><rect x="209" y="10" width="1" height="2" fill="#000"/><rect x="229" y="10" width="1" height="2" fill="#000"/><rect x="239" y="10" width="1" height="2" fill="#000"/><rect x="249" y="10" width="1" height="2" fill="#000"/><rect x="259" y="10" width="1" height="2" fill="#000"/><rect x="269" y="9" width="1" height="4" fill="#000"/><rect x="279" y="10" width="1" height="2" fill="#000"/><rect x="289" y="10" width="1" height="2" fill="#000"/><rect x="299" y="10" width="1" height="2" fill="#000"/><rect x="309" y="10" width="1" height="2" fill="#000"/><rect x="329" y="10" width="1" height="2" fill="#000"/><rect x="339" y="10" width="1" height="2" fill="#000"/><rect x="349" y="10" width="1" height="2" fill="#000"/><rect x="359" y="10" width="1" height="2" fill="#000"/><rect x="369" y="9" width="1" height="4" fill="#000"/><rect x="379" y="10" width="1" height="2" fill="#000"/><rect x="389" y="10" width="1" height="2" fill="#000"/><rect x="399" y="10" width="1" height="2" fill="#000"/><rect x="409" y="10" width="1" height="2" fill="#000"/><rect x="429" y="10" width="1" height="2" fill="#000"/><rect x="439" y="10" width="1" height="2" fill="#000"/><rect x="449" y="10" width="1" height="2" fill="#000"/><rect x="459" y="10" width="1" height="2" fill="#000"/><rect x="469" y="9" width="1" height="4" fill="#000"/><rect x="479" y="10" width="1" height="2" fill="#000"/><rect x="489" y="10" width="1" height="2" fill="#000"/><rect x="499" y="10" width="1" height="2" fill="#000"/><rect x="509" y="10" width="1" height="2" fill="#000"/><rect x="529" y="10" width="1" height="2" fill="#000"/><rect x="539" y="10" width="1" height="2" fill="#000"/><rect x="549" y="10" width="1" height="2" fill="#000"/><rect x="559" y="10" width="1" height="2" fill="#000"/><rect x="569" y="9" width="1" height="4" fill="#000"/><rect x="579" y="10" width="1" height="2" fill="#000"/><rect x="589" y="10" width="1" height="2" fill="#000"/><rect x="599" y="10" width="1" height="2" fill="#000"/><rect x="609" y="10" width="1" height="2" fill="#000"/><rect x="629" y="10" width="1" height="2" fill="#000"/><rect x="639" y="10" width="1" height="2" fill="#000"/><rect x="649" y="10" width="1" height="2" fill="#000"/><rect x="659" y="10" width="1" height="2" fill="#000"/><rect x="669" y="9" width="1" height="4" fill="#000"/><rect x="679" y="10" width="1" height="2" fill="#000"/><rect x="689" y="10" width="1" height="2" fill="#000"/><rect x="699" y="10" width="1" height="2" fill="#000"/><rect x="709" y="10" width="1" height="2" fill="#000"/><rect x="729" y="10" width="1" height="2" fill="#000"/><text x="20.0" y="15" text-anchor="middle" font-family="Liberation Sans,sans-serif" font-size="11" fill="#000">0</text><text x="120.0" y="15" text-anchor="middle" font-family="Liberation Sans,sans-serif" font-size="11" fill="#000">100</text><text x="220.0" y="15" text-anchor="middle" font-family="Liberation Sans,sans-serif" font-size="11" fill="#000">200</text><text x="320.0" y="15" text-anchor="middle" font-family="Liberation Sans,sans-serif" font-size="11" fill="#000">300</text><text x="420.0" y="15" text-anchor="middle" font-family="Liberation Sans,sans-serif" font-size="11" fill="#000">400</text><text x="520.0" y="15" text-anchor="middle" font-family="Liberation Sans,sans-serif" font-size="11" fill="#000">500</text><text x="620.0" y="15" text-anchor="middle" font-family="Liberation Sans,sans-serif" font-size="11" fill="#000">600</text><text x="720.0" y="15" text-anchor="middle" font-family="Liberation Sans,sans-serif" font-size="11" fill="#000">700</text><rect x="152" y="4" width="8" height="13" fill="#c9c9c9"/><path d="M153 7.500h1.500v6h-1.500M158 7.500h-1.500v6h1.500" stroke="#fff" fill="none"/><rect x="197" y="4" width="8" height="13" fill="#c9c9c9"/><path d="M198 7.500h1.500v6h-1.500M203 7.500h-1.500v6h1.500" stroke="#fff" fill="none"/><rect x="242" y="4" width="8" height="13" fill="#c9c9c9"/><path d="M243 7.500h1.500v6h-1.500M248 7.500h-1.500v6h1.500" stroke="#fff" fill="none"/><rect x="287" y="4" width="8" height="13" fill="#c9c9c9"/><path d="M288 7.500h1.500v6h-1.500M293 7.500h-1.500v6h1.500" stroke="#fff" fill="none"/><rect x="332" y="4" width="8" height="13" fill="#c9c9c9"/><path d="M333 7.500h1.500v6h-1.500M338 7.500h-1.500v6h1.500" stroke="#fff" fill="none"/><rect x="377" y="4" width="8" height="13" fill="#c9c9c9"/><path d="M378 7.500h1.500v6h-1.500M383 7.500h-1.500v6h1.500" stroke="#fff" fill="none"/><rect x="422" y="4" width="8" height="13" fill="#c9c9c9"/><path d="M423 7.500h1.500v6h-1.500M428 7.500h-1.500v6h1.500" stroke="#fff" fill="none"/><rect x="467" y="4" width="8" height="13" fill="#c9c9c9"/><path d="M468 7.500h1.500v6h-1.500M473 7.500h-1.500v6h1.500" stroke="#fff" fill="none"/><rect x="512" y="4" width="8" height="13" fill="#c9c9c9"/><path d="M513 7.500h1.500v6h-1.500M518 7.500h-1.500v6h1.500" stroke="#fff" fill="none"/><rect x="557" y="4" width="8" height="13" fill="#c9c9c9"/><path d="M558 7.500h1.500v6h-1.500M563 7.500h-1.500v6h1.500" stroke="#fff" fill="none"/><rect x="602" y="4" width="8" height="13" fill="#c9c9c9"/><path d="M603 7.500h1.500v6h-1.500M608 7.500h-1.500v6h1.500" stroke="#fff" fill="none"/><rect x="647" y="4" width="8" height="13" fill="#c9c9c9"/><path d="M648 7.500h1.500v6h-1.500M653 7.500h-1.500v6h1.500" stroke="#fff" fill="none"/><rect x="692" y="4" width="8" height="13" fill="#c9c9c9"/><rect x="693" y="5" width="1" height="1" fill="#fff"/><rect x="695" y="5" width="1" height="1" fill="#fff"/><rect x="697" y="5" width="1" height="1" fill="#fff"/><rect x="699" y="5" width="1" height="1" fill="#fff"/><rect x="693" y="7" width="1" height="1" fill="#fff"/><rect x="695" y="7" width="1" height="1" fill="#fff"/><rect x="697" y="7" width="1" height="1" fill="#fff"/><rect x="699" y="7" width="1" height="1" fill="#fff"/><rect x="693" y="9" width="1" height="1" fill="#fff"/><rect x="695" y="9" width="1" height="1" fill="#fff"/><rect x="697" y="9" width="1" height="1" fill="#fff"/><rect x="699" y="9" width="1" height="1" fill="#fff"/><rect x="693" y="11" width="1" height="1" fill="#fff"/><rect x="695" y="11" width="1" height="1" fill="#fff"/><rect x="697" y="11" width="1" height="1" fill="#fff"/><rect x="699" y="11" width="1" height="1" fill="#fff"/><rect x="693" y="13" width="1" height="1" fill="#fff"/><rect x="695" y="13" width="1" height="1" fill="#fff"/><rect x="697" y="13" width="1" height="1" fill="#fff"/><rect x="699" y="13" width="1" height="1" fill="#fff"/><rect x="693" y="15" width="1" height="1" fill="#fff"/><rect x="695" y="15" width="1" height="1" fill="#fff"/><rect x="697" y="15" width="1" height="1" fill="#fff"/><rect x="699" y="15" width="1" height="1" fill="#fff"/><rect x="25" y="4" width="4" height="13" fill="#c9c9c9"/><rect x="26" y="5" width="1" height="1" fill="#fff"/><rect x="28" y="5" width="1" height="1" fill="#fff"/><rect x="30" y="5" width="1" height="1" fill="#fff"/><rect x="26" y="7" width="1" height="1" fill="#fff"/><rect x="28" y="7" width="1" height="1" fill="#fff"/><rect x="30" y="7" width="1" height="1" fill="#fff"/><rect x="26" y="9" width="1" height="1" fill="#fff"/><rect x="28" y="9" width="1" height="1" fill="#fff"/><rect x="30" y="9" width="1" height="1" fill="#fff"/><rect x="26" y="11" width="1" height="1" fill="#fff"/><rect x="28" y="11" width="1" height="1" fill="#fff"/><rect x="30" y="11" width="1" height="1" fill="#fff"/><rect x="26" y="13" width="1" height="1" fill="#fff"/><rect x="28" y="13" width="1" height="1" fill="#fff"/><rect x="30" y="13" width="1" height="1" fill="#fff"/><rect x="26" y="15" width="1" height="1" fill="#fff"/><rect x="28" y="15" width="1" height="1" fill="#fff"/><rect x="30" y="15" width="1" height="1" fill="#fff"/><path d="M28.500 2.500h8v2.500l-3.500 5.500 3.500 5.500v2.500h-8v-2.500l3.500-5.500-3.500-5.500z" fill="#e6e6e6" stroke="#8c8c8c" stroke-width="1"/><path d="M29.500 5v-1.500h5.500M29.800 5.800l2.700 4.200M29.500 15.500l2-3" stroke="#6cc0f4" stroke-width="1" fill="none"/><rect x="28.500" y="18.500" width="8" height="6" fill="#e6e6e6" stroke="#8c8c8c"/><path d="M29.500 22.500v-3h5" stroke="#6cc0f4" fill="none"/><path d="M148.500 18.500v-3.500l4-4 4 4v3.500z" fill="#e6e6e6" stroke="#8c8c8c"/><path d="M149.300 15.300l3.200-3.200" stroke="#5ab8f0" stroke-width="1.200"/><rect x="80" y="18" width="1" height="2" fill="#000"/><rect x="128" y="18" width="1" height="2" fill="#000"/></svg>
 <div class="abs" style="left:7px;top:150px;width:2px;height:471px;background:#d2d2d2"></div>
 <!-- document -->
 <div id="doc" class="abs">
  <div id="t1" class="abs">
   <div class="abs" style="left:4px;top:4px;width:126px;height:112px;background:#333"><span class="abs" style="left:3px;top:3px;height:16px;line-height:16px;background:#ffcc99;color:#000;font:italic bold 13px/16px 'Liberation Sans',sans-serif;white-space:nowrap;">Vertical test sample</span></div>
   <div class="abs" style="left:4px;top:117px;width:126px;height:28px;background:#333;color:#ffff99;font-size:19.5px;line-height:28px;text-indent:3px;">Sales</div>
   <div class="c1" style="left:131px"><span class="vl">January</span></div><div class="c2" style="left:131px">10</div>
   <div class="c1" style="left:176px"><span class="vl">February</span></div><div class="c2" style="left:176px">18</div>
   <div class="c1" style="left:221px"><span class="vl">March</span></div><div class="c2" style="left:221px">5</div>
   <div class="c1" style="left:266px"><span class="vl">April</span></div><div class="c2" style="left:266px">22</div>
   <div class="c1" style="left:311px"><span class="vl">May</span></div><div class="c2" style="left:311px">10</div>
   <div class="c1" style="left:356px"><span class="vl">June</span></div><div class="c2" style="left:356px">12</div>
   <div class="c1" style="left:401px"><span class="vl">July</span></div><div class="c2" style="left:401px">15</div>
   <div class="c1" style="left:446px"><span class="vl">August</span></div><div class="c2" style="left:446px">17</div>
   <div class="c1" style="left:491px"><span class="vl">September</span></div><div class="c2" style="left:491px">6</div>
   <div class="c1" style="left:536px"><span class="vl">October</span></div><div class="c2" style="left:536px">44</div>
   <div class="c1" style="left:581px"><span class="vl">November</span></div><div class="c2" style="left:581px">80</div>
   <div class="c1" style="left:626px"><span class="vl">December</span></div><div class="c2" style="left:626px">14</div>
  </div>
  <div id="t2" class="abs">
   <div class="hd" style="left:2px;top:2px;width:185px;height:26px;line-height:27px;">Text (no rotation)</div>
   <div class="hd" style="left:189px;top:2px;width:214px;height:26px;line-height:27px;">Graphics (rotated by 270°)</div>
   <div class="abs" style="left:2px;top:30px;width:185px;height:203px;background:#99ccff">
     <div class="it1" style="top:21px">:-(</div>
     <div class="it1" style="top:50px">;-)</div>
     <div class="it1" style="top:79px">:-)</div>
     <div class="it1" style="top:108px">:-D</div>
     <div class="abs" style="left:0;width:185px;top:139px;text-align:center;font:italic 13px/15px 'Liberation Sans',sans-serif;color:#000">Table, 4 rows x 1 column</div>
   </div>
   <div class="abs" style="left:189px;top:30px;width:214px;height:203px;background:#99cc00">
     <div class="it2" style="top:15px"><svg width="15" height="15" viewBox="0 0 15 15"><circle cx="7.5" cy="7.5" r="7" fill="#9db3f6" stroke="#000" stroke-width="1"/><rect x="5" y="4" width="2" height="2" fill="#000"/><rect x="5" y="9" width="2" height="2" fill="#000"/><path d="M2.200 5.200l2.100-2.100M2.200 9.500l2.100 2.100" stroke="#000" stroke-width="0.900" fill="none"/><path d="M10.800 4.200q-2.300 3.300 0 6.600" stroke="#000" stroke-width="0.900" fill="none"/></svg></div>
     <div class="it2" style="top:59px"><svg width="15" height="15" viewBox="0 0 15 15"><circle cx="7.5" cy="7.5" r="7" fill="#ffff00" stroke="#000" stroke-width="1"/><rect x="4.200" y="4" width="2" height="2" fill="#000"/><path d="M4 7.300q1.800 0.300 1.700 2t-1.400 2.300" stroke="#000" stroke-width="0.900" fill="none"/><path d="M9.300 3.300q4.600 4.200 0 8.400" stroke="#000" stroke-width="0.900" fill="none"/></svg></div>
     <div class="it2" style="top:103px"><svg width="15" height="15" viewBox="0 0 15 15"><circle cx="7.5" cy="7.5" r="7" fill="#ffff00" stroke="#000" stroke-width="1"/><rect x="4.200" y="4" width="2" height="2" fill="#000"/><rect x="4.200" y="9" width="2" height="2" fill="#000"/><path d="M9.300 3.300q4.600 4.200 0 8.400" stroke="#000" stroke-width="0.900" fill="none"/></svg></div>
     <div class="it2" style="top:147px"><svg width="15" height="15" viewBox="0 0 15 15"><circle cx="7.5" cy="7.5" r="7" fill="#5ce8d4" stroke="#000" stroke-width="1"/><path d="M6.300 2v11c7-0.500 7-10.500 0-11z" fill="#fff" stroke="#000" stroke-width="0.900"/><path d="M6.300 5.700h5M6.300 9.300h5" stroke="#000" stroke-width="0.900"/><path d="M4.300 2.800q-2 2.200 0 4.400M4.300 7.800q-2 2.200 0 4.400" stroke="#000" stroke-width="0.900" fill="none"/></svg></div>
     <div class="abs" style="left:115.5px;top:33px;width:15px;height:138px;"><div style="position:absolute;left:0;top:138px;width:138px;height:15px;transform-origin:0 0;transform:rotate(-90deg);font:13.2px/15px 'Liberation Sans',sans-serif;color:#000;white-space:nowrap;">Table, 1 row x 4 colums</div></div>
   </div>
   <div class="hd" style="left:2px;top:235px;width:401px;height:24px;line-height:24px;"><div style="transform:rotate(180deg);letter-spacing:-0.15px">Rotated emoticons</div></div>
  </div>
 </div>
 <!-- scrollbar -->
 <div class="abs" style="left:715px;top:150px;width:18px;height:471px;background:linear-gradient(90deg,#8e8e8e,#a4a4a4 20%,#b2b2b2 60%,#a6a6a6 90%,#c8c8c8)"></div>
 <div class="abs" style="left:716px;top:151px;width:16px;height:15px;box-sizing:border-box;border:1px solid #b0b0b0;border-radius:3px;background:linear-gradient(#dedede,#cfcfcf)"><div class="abs" style="left:3px;top:4px;border:4px solid transparent;border-top:0;border-bottom:5px solid #666;"></div></div>
 <div class="abs" style="left:716px;top:604px;width:16px;height:15px;box-sizing:border-box;border:1px solid #b0b0b0;border-radius:3px;background:linear-gradient(#dedede,#cfcfcf)"><div class="abs" style="left:3px;top:5px;border:4px solid transparent;border-bottom:0;border-top:5px solid #666;"></div></div>
 <!-- status bar -->
 <div class="abs" style="left:7px;top:621px;width:728px;height:21px;background:linear-gradient(#cfcfcf,#dcdcdc 40%,#c6c6c6);border-top:1px solid #b0b0b0;box-sizing:border-box"></div>
 <div class="abs" style="left:618px;top:626px;width:50px;height:14px;box-sizing:border-box;border:1px solid #b4b4b4;border-radius:4px;background:linear-gradient(#ffffff,#ececec);font:bold 7.5px/12px 'Liberation Sans',sans-serif;text-align:center;color:#000;letter-spacing:0">Style</div>
 <div class="abs" style="left:670px;top:626px;width:51px;height:14px;box-sizing:border-box;border:1px solid #7fb0d8;border-radius:4px;background:linear-gradient(#d6ecfb,#8cc8f0);font:bold 7.5px/12px 'Liberation Sans',sans-serif;text-align:center;color:#000;letter-spacing:0">Language</div>
 <svg class="abs" style="left:721px;top:628px" width="12" height="12"><path d="M1 11L11 1M5 11L11 5M9 11L11 9" stroke="#9a9a9a"/><path d="M2 11L11 2M6 11L11 6" stroke="#f4f4f4"/></svg>
 <div class="abs" style="left:411px;top:636px;width:5px;height:1px;background:#aaa"></div>
</div>
</body>
</html>
